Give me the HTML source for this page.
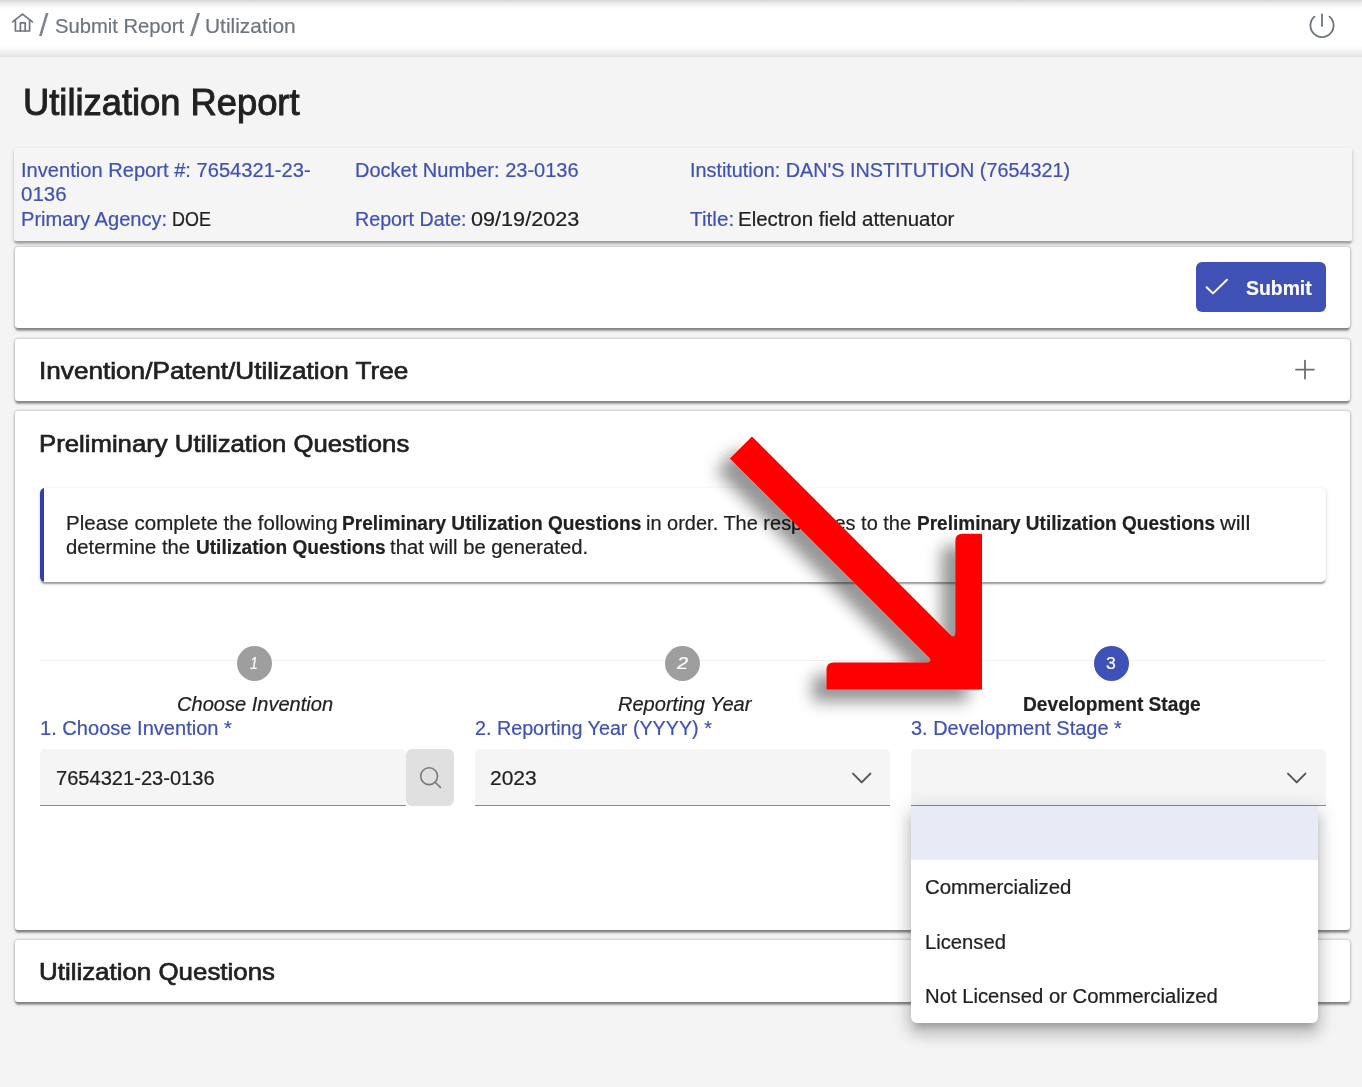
<!DOCTYPE html>
<html lang="en">
<head>
<meta charset="utf-8">
<title>Utilization Report</title>
<style>
html,body{margin:0;padding:0}
body{width:1362px;height:1087px;overflow:hidden;background:#f4f4f4;position:relative;font-family:"Liberation Sans",Arial,sans-serif}
.abs{position:absolute}
.t{-webkit-text-stroke:0.2px currentColor;position:absolute;white-space:nowrap;line-height:1;transform-origin:0 0;display:block}
.topbar{left:0;top:0;width:1362px;height:56.5px;background:linear-gradient(to bottom,#d6d6d6 0,#ececec 3px,#fbfbfb 7px,#fff 10px,#fff 46px,#f6f6f6 50px,#e4e4e4 56.5px)}
.card{position:absolute;left:14.8px;width:1335.5px;background:#fff;border-radius:3px;box-shadow:0 0 0 1.5px rgba(0,0,0,.08),0 3.5px 2px -1px rgba(0,0,0,.25),0 1.5px 2px 0 rgba(0,0,0,.14),0 1.5px 4px 0 rgba(0,0,0,.12)}
.info{left:14px;width:1338px;top:148px;height:92.5px;background:#f5f5f5;border-radius:2px;box-shadow:0 3.5px 2px -1px rgba(0,0,0,.17),0 1.5px 2px 0 rgba(0,0,0,.13),0 2px 5px 0 rgba(0,0,0,.14)}
.btn{left:1196px;top:262px;width:130px;height:50px;background:#3f51b5;border-radius:6px}
.notice{left:40px;top:488px;width:1286px;height:93.5px;background:#fff;border-radius:5px;box-shadow:0 3px 1.5px -1.5px rgba(0,0,0,.2),0 1.5px 1.5px 0 rgba(0,0,0,.14),0 1.5px 4px 0 rgba(0,0,0,.12);overflow:hidden}
.notice:before{content:"";position:absolute;left:-0.5px;top:0;bottom:0;width:4.2px;background:#2f3fae}
.line{left:40px;top:659.7px;width:1286px;height:1.5px;background:#f0f0f0}
.circ{width:35px;height:35px;border-radius:50%;top:645.7px;background:#9e9e9e}
.field{top:749px;height:55.5px;background:#f5f5f5;border-radius:5px 5px 0 0;border-bottom:1.7px solid #8a8a8a}
.sbtn{left:405.9px;top:749px;width:48px;height:57px;background:#e0e0e0;border-radius:6px}
.panel{left:910.5px;top:806px;width:407.5px;height:216.5px;background:#fff;border-radius:0 0 6px 6px;box-shadow:0 7px 7px -4px rgba(0,0,0,.2),0 11px 14px 1.5px rgba(0,0,0,.14),0 4px 20px 3px rgba(0,0,0,.12)}
.hl{left:0;top:0;width:100%;height:54px;background:#e8eaf6}
svg{position:absolute;overflow:visible}
</style>
</head>
<body>
<div class="abs topbar"></div>
<!-- home icon -->
<svg style="left:0;top:0" width="60" height="50" viewBox="0 0 60 50" fill="none" stroke="#6c757d" stroke-width="1.7" stroke-linecap="round" stroke-linejoin="round">
<path d="M12.6 21.8 L22.5 14.2 L32.4 21.8"/>
<path d="M15.4 20.2 V31 H29.6 V20.2"/>
<path d="M20.4 31 V22.8 H25.2 V31"/>
</svg>
<!-- power icon -->
<svg style="left:1300px;top:5px" width="44" height="44" viewBox="0 0 44 44" fill="none" stroke="#6c757d" stroke-width="1.8" stroke-linecap="round">
<path d="M14.5 11.6 A11.6 11.6 0 1 0 29.5 11.6"/>
<path d="M22 9.5 V21"/>
</svg>

<div class="abs info"></div>
<div class="card" style="top:247px;height:81px"></div>
<div class="abs btn"></div>
<svg style="left:1200px;top:270px" width="40" height="34" viewBox="0 0 40 34" fill="none" stroke="#fff" stroke-width="2" stroke-linecap="round" stroke-linejoin="round">
<path d="M6.6 17.2 L13 23.4 L27 9.8"/>
</svg>
<div class="card" style="top:338.5px;height:62.5px"></div>
<svg style="left:1290px;top:355px" width="30" height="30" viewBox="0 0 30 30" fill="none" stroke="#6f6f6f" stroke-width="1.8" stroke-linecap="round">
<path d="M6 14.6 H24 M15 5.6 V23.6"/>
</svg>
<div class="card" style="top:411px;height:518.5px"></div>
<div class="abs notice"></div>
<div class="abs line"></div>
<div class="abs circ" style="left:236.7px"></div>
<div class="abs circ" style="left:665.3px"></div>
<div class="abs circ" style="left:1093.8px;background:#3f51b5"></div>
<div class="abs field" style="left:40px;width:366px"></div>
<div class="abs sbtn"></div>
<svg style="left:405.6px;top:749px" width="50" height="57" viewBox="0 0 50 57" fill="none" stroke="#7a7a7a" stroke-width="1.6" stroke-linecap="round">
<circle cx="23.1" cy="27.2" r="8.4"/>
<path d="M29.2 33.2 L34.4 38.4"/>
</svg>
<div class="abs field" style="left:475px;width:415px"></div>
<svg style="left:846px;top:764px" width="30" height="28" viewBox="0 0 30 28" fill="none" stroke="#555" stroke-width="2" stroke-linecap="round" stroke-linejoin="round">
<path d="M7 9.6 L15.7 18.4 L24.4 9.6"/>
</svg>
<div class="abs field" style="left:910.5px;width:415px"></div>
<svg style="left:1281px;top:764px" width="30" height="28" viewBox="0 0 30 28" fill="none" stroke="#555" stroke-width="2" stroke-linecap="round" stroke-linejoin="round">
<path d="M7 9.6 L15.7 18.4 L24.4 9.6"/>
</svg>
<div class="card" style="top:940px;height:62px"></div>
<div class="abs panel"><div class="abs hl"></div></div>

<span class="t" style="left:38.50px;top:10.18px;font-size:30.5px;color:#7d858c;-webkit-text-stroke:0;transform:scaleX(1.1197)">/</span>
<span class="t" style="left:54.89px;top:14.52px;font-size:21px;color:#6c757d;transform:scaleX(0.9619)">Submit Report</span>
<span class="t" style="left:189.50px;top:10.18px;font-size:30.5px;color:#7d858c;-webkit-text-stroke:0;transform:scaleX(1.1786)">/</span>
<span class="t" style="left:205.37px;top:14.52px;font-size:21px;color:#6c757d;transform:scaleX(0.9963)">Utilization</span>
<span class="t" style="left:22.91px;top:84.83px;font-size:36px;color:#212121;-webkit-text-stroke:0.95px currentColor;transform:scaleX(1.0089)">Utilization Report</span>
<span class="t" style="left:20.90px;top:161.31px;font-size:19.6px;color:#3f51b5;transform:scaleX(1.0265)">Invention Report #: 7654321-23-</span>
<span class="t" style="left:20.88px;top:185.31px;font-size:19.6px;color:#3f51b5;transform:scaleX(1.0475)">0136</span>
<span class="t" style="left:20.90px;top:209.51px;font-size:19.6px;color:#3f51b5;transform:scaleX(1.0242)">Primary Agency:</span>
<span class="t" style="left:171.96px;top:209.51px;font-size:19.6px;color:#212121;transform:scaleX(0.9148)">DOE</span>
<span class="t" style="left:355.40px;top:161.31px;font-size:19.6px;color:#3f51b5;transform:scaleX(1.0214)">Docket Number: 23-0136</span>
<span class="t" style="left:355.41px;top:209.51px;font-size:19.6px;color:#3f51b5;transform:scaleX(1.0042)">Report Date:</span>
<span class="t" style="left:471.35px;top:209.51px;font-size:19.6px;color:#212121;transform:scaleX(1.1042)">09/19/2023</span>
<span class="t" style="left:689.91px;top:161.31px;font-size:19.6px;color:#3f51b5;transform:scaleX(1.0104)">Institution: DAN'S INSTITUTION (7654321)</span>
<span class="t" style="left:689.88px;top:209.51px;font-size:19.6px;color:#3f51b5;transform:scaleX(1.0588)">Title:</span>
<span class="t" style="left:738.39px;top:209.51px;font-size:19.6px;color:#212121;transform:scaleX(1.0454)">Electron field attenuator</span>
<span class="t" style="left:1245.92px;top:277.57px;font-size:20px;color:#fff;font-weight:700;transform:scaleX(0.9697)">Submit</span>
<span class="t" style="left:39.22px;top:358.76px;font-size:24.5px;color:#212121;-webkit-text-stroke:0.7px currentColor;transform:scaleX(1.0677)">Invention/Patent/Utilization Tree</span>
<span class="t" style="left:39.23px;top:431.76px;font-size:24.5px;color:#212121;-webkit-text-stroke:0.7px currentColor;transform:scaleX(1.0500)">Preliminary Utilization Questions</span>
<span class="t" style="left:39.22px;top:959.76px;font-size:24.5px;color:#212121;-webkit-text-stroke:0.7px currentColor;transform:scaleX(1.0570)">Utilization Questions</span>
<span class="t" style="left:66.38px;top:514.41px;font-size:19.6px;color:#212121;transform:scaleX(1.0480)">Please complete the following</span>
<span class="t" style="left:341.63px;top:514.41px;font-size:19.6px;color:#212121;font-weight:700;transform:scaleX(0.9747)">Preliminary Utilization Questions</span>
<span class="t" style="left:646.40px;top:514.41px;font-size:19.6px;color:#212121;transform:scaleX(1.0197)">in order. The responses to the</span>
<span class="t" style="left:916.93px;top:514.41px;font-size:19.6px;color:#212121;font-weight:700;transform:scaleX(0.9705)">Preliminary Utilization Questions</span>
<span class="t" style="left:1220.35px;top:514.41px;font-size:19.6px;color:#212121;transform:scaleX(1.1139)">will</span>
<span class="t" style="left:66.39px;top:538.41px;font-size:19.6px;color:#212121;transform:scaleX(1.0361)">determine the</span>
<span class="t" style="left:195.68px;top:538.41px;font-size:19.6px;color:#212121;font-weight:700;transform:scaleX(0.9732)">Utilization Questions</span>
<span class="t" style="left:389.89px;top:538.41px;font-size:19.6px;color:#212121;transform:scaleX(1.0334)">that will be generated.</span>
<span class="t" style="left:249.87px;top:655.78px;font-size:16.8px;color:#fff;font-style:italic;transform:scaleX(0.8461)">1</span>
<span class="t" style="left:677.40px;top:655.78px;font-size:16.8px;color:#fff;font-style:italic;transform:scaleX(1.1873)">2</span>
<span class="t" style="left:1106.47px;top:655.78px;font-size:16.8px;color:#fff;transform:scaleX(1.0508)">3</span>
<span class="t" style="left:177.40px;top:694.81px;font-size:19.6px;color:#212121;font-style:italic;transform:scaleX(1.0236)">Choose Invention</span>
<span class="t" style="left:618.15px;top:694.81px;font-size:19.6px;color:#212121;font-style:italic;transform:scaleX(1.0230)">Reporting Year</span>
<span class="t" style="left:1023.18px;top:694.81px;font-size:19.6px;color:#212121;font-weight:700;transform:scaleX(0.9775)">Development Stage</span>
<span class="t" style="left:40.10px;top:718.71px;font-size:19.6px;color:#3f51b5;transform:scaleX(1.0243)">1. Choose Invention *</span>
<span class="t" style="left:474.91px;top:718.71px;font-size:19.6px;color:#3f51b5;transform:scaleX(1.0066)">2. Reporting Year (YYYY) *</span>
<span class="t" style="left:910.65px;top:718.71px;font-size:19.6px;color:#3f51b5;transform:scaleX(1.0188)">3. Development Stage *</span>
<span class="t" style="left:56.10px;top:768.91px;font-size:19.6px;color:#212121;transform:scaleX(1.0252)">7654321-23-0136</span>
<span class="t" style="left:490.37px;top:768.91px;font-size:19.6px;color:#212121;transform:scaleX(1.0717)">2023</span>
<span class="t" style="left:925.14px;top:878.16px;font-size:19.6px;color:#212121;transform:scaleX(1.0422)">Commercialized</span>
<span class="t" style="left:925.14px;top:933.16px;font-size:19.6px;color:#212121;transform:scaleX(1.0311)">Licensed</span>
<span class="t" style="left:925.14px;top:986.91px;font-size:19.6px;color:#212121;transform:scaleX(1.0344)">Not Licensed or Commercialized</span>

<!-- red arrow annotation -->
<svg style="left:0;top:0" width="1362" height="1087" viewBox="0 0 1362 1087">
<defs><filter id="sh" x="-20%" y="-20%" width="140%" height="140%"><feDropShadow dx="-14" dy="12" stdDeviation="8" flood-color="#000" flood-opacity=".42"/></filter></defs>
<path filter="url(#sh)" fill="#ff0000" d="M752 436.5 L950 634.5 Q955.4 640 955.4 630 L955.4 541 Q955.4 533.8 962.6 533.8 L982 533.8 L982 689.6 L826.5 689.6 L826.5 669.8 Q826.5 662.6 833.7 662.6 L924 662.6 Q934 662.6 928.5 657 L729.9 458.5 Z"/>
</svg>
</body>
</html>
